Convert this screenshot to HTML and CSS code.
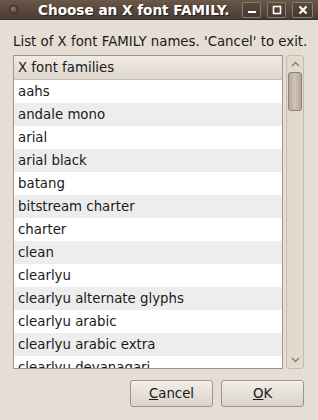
FILE: index.html
```html
<!DOCTYPE html>
<html lang="en">
<head>
  <meta charset="UTF-8">
  <title>Choose an X font FAMILY.</title>
  <link rel="stylesheet" href="styles.css">
</head>
<body>

<div class="window">
  <div class="titlebar">
    <span class="menu-dot"></span>
    <span class="title">Choose an X font FAMILY.</span>
    <div class="win-buttons">
      <span class="wbtn"><svg width="10" height="10" viewBox="0 0 10 10"><rect x="1" y="6" width="8" height="2" fill="#fff"/></svg></span>
      <span class="wbtn"><svg width="10" height="10" viewBox="0 0 10 10"><rect x="1.5" y="1.5" width="7" height="7" fill="none" stroke="#fff" stroke-width="1.6"/></svg></span>
      <span class="wbtn"><svg width="10" height="10" viewBox="0 0 10 10"><path d="M1.5 1.5 L8.5 8.5 M8.5 1.5 L1.5 8.5" stroke="#fff" stroke-width="2.2"/></svg></span>
    </div>
  </div>

  <div class="content">
    <p class="label">List of X font FAMILY names. 'Cancel' to exit.</p>

    <div class="list-area">
      <div class="list">
        <div class="list-header">X font families</div>
        <div class="rows">
          <div class="row">aahs</div>
          <div class="row">andale mono</div>
          <div class="row">arial</div>
          <div class="row">arial black</div>
          <div class="row">batang</div>
          <div class="row">bitstream charter</div>
          <div class="row">charter</div>
          <div class="row">clean</div>
          <div class="row">clearlyu</div>
          <div class="row">clearlyu alternate glyphs</div>
          <div class="row">clearlyu arabic</div>
          <div class="row">clearlyu arabic extra</div>
          <div class="row">clearlyu devanagari</div>
        </div>
      </div>
      <div class="scrollbar">
        <svg class="arrow" width="9" height="6" viewBox="0 0 9 6"><path d="M1 5 L4.5 1.5 L8 5" fill="none" stroke="#7a6f66" stroke-width="1.2"/></svg>
        <div class="thumb"></div>
        <div class="track"></div>
        <svg class="arrow" width="9" height="6" viewBox="0 0 9 6"><path d="M1 1 L4.5 4.5 L8 1" fill="none" stroke="#7a6f66" stroke-width="1.2"/></svg>
      </div>
    </div>

    <div class="actions">
      <button class="btn"><u>C</u>ancel</button>
      <button class="btn"><u>O</u>K</button>
    </div>
  </div>
</div>

</body>
</html>
```

FILE: styles.css
```css
body {
  margin: 0;
  font-family: "DejaVu Sans", sans-serif;
  font-size: 13.33px;
  color: #1a1a1a;
  background: #e6ddd4;
}

.window {
  width: 318px;
  height: 420px;
  display: flex;
  flex-direction: column;
}

.titlebar {
  height: 19px;
  display: flex;
  align-items: center;
  background: linear-gradient(#6a5849, #4a3b31);
  border-bottom: 1px solid #3a2e26;
  padding: 0 5px 0 9px;
}

.menu-dot {
  width: 7px;
  height: 7px;
  border-radius: 50%;
  border: 1px solid #2e251f;
  background: radial-gradient(circle at 40% 35%, #8a7868, #4a3c32);
}

.title {
  margin-left: 20px;
  font-size: 13.6px;
  font-weight: bold;
  color: #fff;
  text-shadow: 1px 1px 0 #2a211b;
  white-space: nowrap;
}

.win-buttons {
  margin-left: auto;
  display: flex;
  gap: 6px;
}

.wbtn {
  width: 17px;
  height: 14px;
  border: 1px solid #8c7a6c;
  border-radius: 2px;
  background: linear-gradient(#5a493d, #45372e);
  display: flex;
  align-items: center;
  justify-content: center;
}

.wbtn:last-child {
  width: 19px;
}

.content {
  flex: 1;
  padding: 0 14px 0 13px;
  display: flex;
  flex-direction: column;
}

.label {
  margin: 14px 0 5px 0;
  line-height: 16px;
  white-space: nowrap;
}

.list-area {
  display: flex;
  gap: 3px;
  height: 314px;
}

.list {
  flex: 1;
  border: 1px solid #a3958a;
  background: #fff;
  overflow: hidden;
}

.list-header {
  height: 23px;
  line-height: 24px;
  padding-left: 4px;
  border-bottom: 1px solid #c9beb3;
  background: linear-gradient(#efebe6, #ded6cd);
}

.row {
  height: 23px;
  line-height: 23px;
  padding-left: 4px;
  white-space: nowrap;
}

.row:nth-child(even) {
  background: #ededed;
}

.scrollbar {
  width: 16px;
  border: 1px solid #c7bbb0;
  border-radius: 3px;
  background: #e2d9cf;
  display: flex;
  flex-direction: column;
  align-items: center;
}

.scrollbar .arrow {
  margin: 5px 0;
}

.thumb {
  width: 12px;
  height: 37px;
  border: 1px solid #8e8074;
  border-radius: 3px;
  background: linear-gradient(90deg, #b8aa9c, #cfc3b7 50%, #b5a697);
}

.track {
  flex: 1;
}

.actions {
  display: flex;
  justify-content: flex-end;
  gap: 8px;
  margin-top: 11px;
}

.btn {
  width: 83px;
  height: 27px;
  font-family: "DejaVu Sans", sans-serif;
  font-size: 13.33px;
  color: #1a1a1a;
  border: 1px solid #a09285;
  border-radius: 3px;
  background: linear-gradient(#f1ede9, #ddd4cb);
  box-shadow: inset 0 1px 0 #fbf9f7;
}

.btn u {
  text-decoration-thickness: 1px;
}
```
